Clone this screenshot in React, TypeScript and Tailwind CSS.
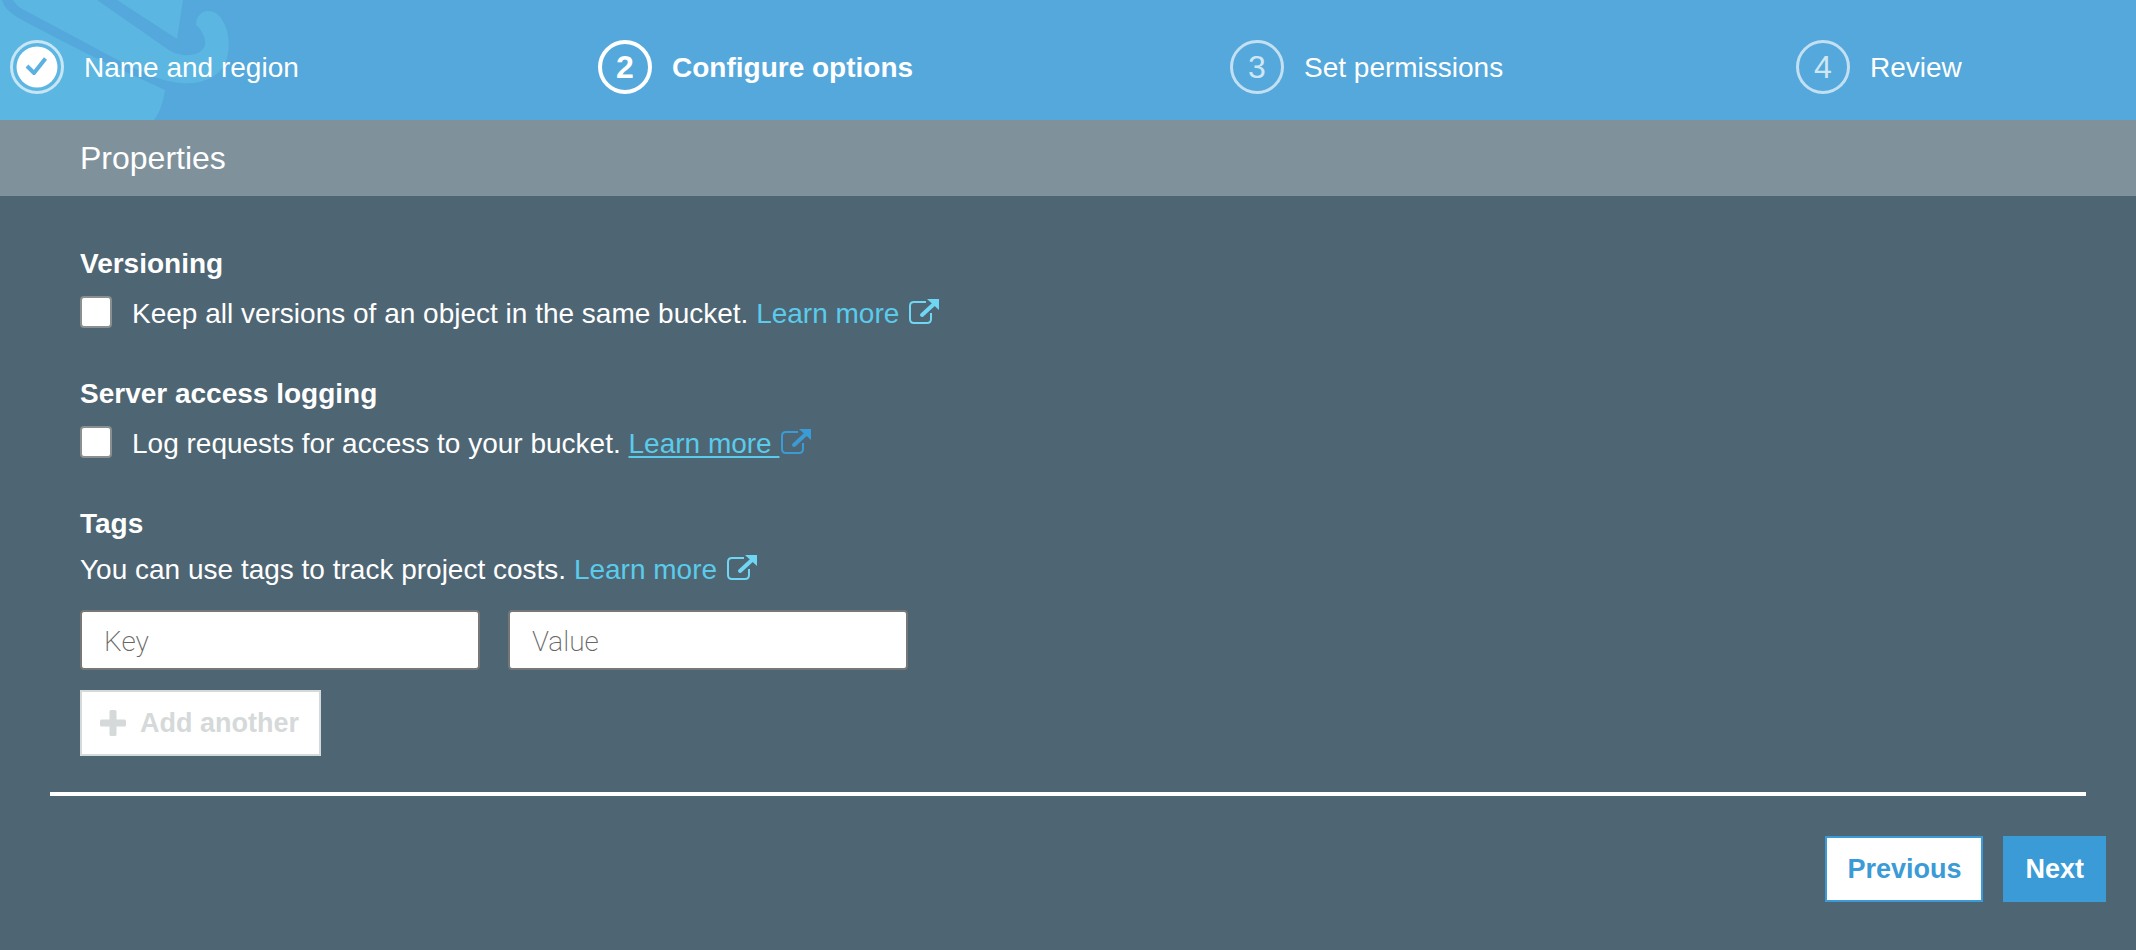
import { ReactNode } from "react"

type StepState = "done" | "active" | "upcoming"

type StepProps = {
  number: number
  title: ReactNode
  state: StepState
}

const steps: StepProps[] = [
  { number: 1, title: "Name and region", state: "done" },
  { number: 2, title: "Configure options", state: "active" },
  { number: 3, title: "Set permissions", state: "upcoming" },
  { number: 4, title: "Review", state: "upcoming" },
]

function Watermark() {
  return (
    <svg className="absolute left-0 top-0 h-full text-[#5bb6e1]" viewBox="0 0 240 120" fill="currentColor" aria-hidden="true">
      <path d="M0 0 H2 C4 7 9 12 17 17 C40 30 70 45 100 60 L165 90 C163 103 160 112 154 120 H0 Z" />
      <path d="M13 0 C16 4 18 7 24 10 L86 43 C110 56 130 67 152 76 C170 83 186 85 200 82 C215 78 224 70 227 58 C230 45 229 33 224 23 C220 15 215 11 208 11 C201 11 196 17 196 25 C202 30 206 38 205 45 C203 53 193 56 183 55 C176 54 172 52 166 48 L97 0 Z" />
      <path d="M117 0 L177 39 L183 0 Z" />
    </svg>
  )
}

function StepIcon({ number, state }: { number: number; state: StepState }) {
  if (state === "done") {
    return (
      <svg className="size-[54px] shrink-0" viewBox="0 0 54 54" fill="none" aria-label="Completed">
        <circle cx="27" cy="27" r="25.5" stroke="#c6e5f5" strokeWidth="3" />
        <circle cx="27" cy="27" r="20.5" fill="#fff" />
        <path d="M17 26 L24 33 L35.5 18.5" stroke="#5bb1e0" strokeWidth="4" strokeLinejoin="round" />
      </svg>
    )
  }
  return (
    <span
      className={`flex size-[54px] shrink-0 items-center justify-center rounded-full text-[32px] leading-none ${
        state === "active" ? "border-4 border-white font-bold text-white" : "border-[3px] border-[#c3e0f3] text-[#cfe7f5]"
      }`}
    >
      {number}
    </span>
  )
}

function Step({ number, title, state }: StepProps) {
  return (
    <li className="flex items-center gap-5" aria-current={state === "active" ? "step" : undefined}>
      <StepIcon number={number} state={state} />
      <span className={`whitespace-nowrap pt-0.5 ${state === "active" ? "font-bold" : ""}`}>{title}</span>
    </li>
  )
}

function ExternalIcon({ className = "" }: { className?: string }) {
  return (
    <svg className={`ml-0.5 inline-block h-[26px] w-[30px] align-[-2px] ${className}`} viewBox="0 0 30 26" fill="none" aria-hidden="true">
      <path d="M17 3 H5 Q1 3 1 7 V20 Q1 24 5 24 H18 Q22 24 22 20 V14" stroke="currentColor" strokeWidth="2" />
      <path d="M13 16 L25 5" stroke="currentColor" strokeWidth="4" strokeLinecap="round" />
      <path d="M18 0 H30 V11 Z" fill="currentColor" />
    </svg>
  )
}

function LearnMore({ visited = false }: { visited?: boolean }) {
  return (
    <a href="#" className="text-[#5bcbeb]">
      <span className={`whitespace-pre ${visited ? "underline decoration-2 underline-offset-3" : ""}`}>Learn more </span>
      <ExternalIcon className={visited ? "text-[#3a9bd6]" : "text-[#6fd6f3]"} />
    </a>
  )
}

type OptionProps = {
  id: string
  heading: ReactNode
  label: ReactNode
  children: ReactNode
}

function Option({ id, heading, label, children }: OptionProps) {
  return (
    <section>
      <h3 className="font-bold">{heading}</h3>
      <div className="mt-2.5 flex items-start gap-5">
        <input
          id={id}
          type="checkbox"
          className="mt-0.5 size-8 shrink-0 appearance-none rounded-sm border-2 border-[#8a8f8f] bg-white checked:bg-[#3a9bd6]"
        />
        <div>
          <label htmlFor={id}>{label}</label> {children}
        </div>
      </div>
    </section>
  )
}

function TagInput({ name }: { name: string }) {
  return (
    <input
      type="text"
      aria-label={name}
      placeholder={name}
      className="h-15 w-100 min-w-0 rounded-sm border-2 border-[#777] bg-white px-[22px] pt-0.5 font-['Roboto','Liberation_Sans',sans-serif] font-extralight text-gray-800 placeholder:text-[#666]"
    />
  )
}

export default function App() {
  return (
    <div className="flex min-h-screen flex-col bg-[#4e6573] font-['Liberation_Sans',Arial,sans-serif] text-[28px] leading-10 text-white">
      <header className="relative h-30 bg-[#54a8db]">
        <Watermark />
        <ol className="relative grid grid-cols-[588fr_632fr_566fr_340fr] pl-2.5 pt-10">
          {steps.map((step) => (
            <Step key={step.number} {...step} />
          ))}
        </ol>
      </header>

      <h2 className="bg-[#7f919b] px-20 py-[18px] text-[32px]">Properties</h2>

      <main className="px-20 pt-12">
        <div className="flex flex-col gap-10">
          <Option id="versioning" heading="Versioning" label="Keep all versions of an object in the same bucket.">
            <LearnMore />
          </Option>
          <Option id="logging" heading="Server access logging" label="Log requests for access to your bucket.">
            <LearnMore visited />
          </Option>
          <section>
            <h3 className="font-bold">Tags</h3>
            <p className="mt-1.5">
              You can use tags to track project costs. <LearnMore />
            </p>
            <div className="mt-5 flex gap-7">
              <TagInput name="Key" />
              <TagInput name="Value" />
            </div>
            <button
              type="button"
              disabled
              className="mt-5 flex h-[66px] items-center gap-3.5 border-2 border-[#d5d9d9] bg-white pl-[18px] pr-5 text-[27px] font-bold text-[#d5d9d9]"
            >
              <svg className="size-[26px]" viewBox="0 0 26 26" fill="currentColor" aria-hidden="true">
                <rect x="9.5" width="7" height="26" rx="1.5" />
                <rect y="9.5" width="26" height="7" rx="1.5" />
              </svg>
              Add another
            </button>
          </section>
        </div>
      </main>

      <footer className="mt-9">
        <hr className="mx-12.5 border-t-4 border-white" />
        <div className="flex justify-end gap-5 px-7.5 py-10 text-[27px] font-bold">
          <button type="button" className="h-[66px] border-2 border-[#3a9bd6] bg-white px-5 text-[#3a9bd6]">
            Previous
          </button>
          <button type="button" className="h-[66px] border-2 border-[#3a9bd6] bg-[#3a9bd6] px-5">
            Next
          </button>
        </div>
      </footer>
    </div>
  )
}
